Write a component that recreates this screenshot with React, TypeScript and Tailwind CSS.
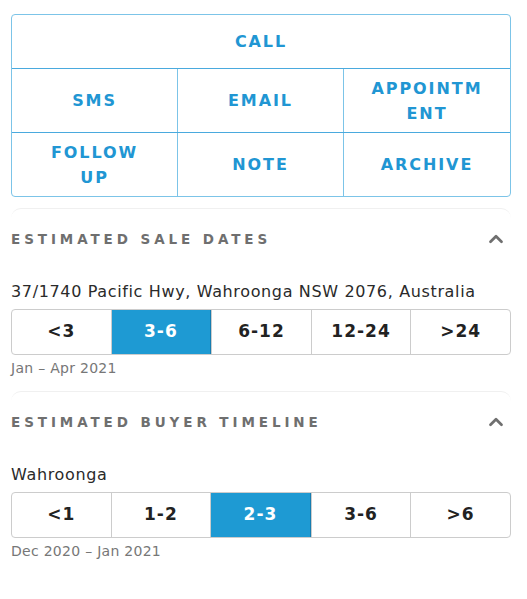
import { ChevronUp } from 'lucide-react';

const font = { fontFamily: '"DejaVu Sans", "Open Sans", sans-serif' };

function ActionCell({ label, className = '' }: { label: React.ReactNode; className?: string }) {
    return (
        <button className={`flex items-center justify-center px-2 text-center text-[16px] font-bold leading-[25px] tracking-[0.12em] text-[#2196d3] ${className}`}>
            {label}
        </button>
    );
}

function Segmented({ options, selected }: { options: string[]; selected: number }) {
    return (
        <div className="flex h-[46px] overflow-hidden rounded-[4px] border border-[#cccccc]">
            {options.map((o, i) => (
                <div
                    key={o}
                    className={`flex flex-1 items-center justify-center text-[17px] font-bold tracking-[0.06em] ${i > 0 ? 'border-l border-[#cccccc]' : ''} ${i === selected ? 'bg-[#1e9ad3] text-white border-r border-r-[#167db0]' : 'text-[#222222]'}`}
                >
                    {o}
                </div>
            ))}
        </div>
    );
}

function Section({ title, place, options, selected, range }: { title: string; place: string; options: string[]; selected: number; range: string }) {
    return (
        <section className="rounded-t-[10px] border-t border-[#f0f0f0]">
            <div className="flex items-center justify-between pt-[19px]">
                <h2 className="text-[13.5px] font-bold tracking-[0.29em] text-[#6f6f6f]">{title}</h2>
                <ChevronUp className="mr-[4px] h-[22px] w-[22px] text-[#6f6f6f]" strokeWidth={3} />
            </div>
            <p className="mt-[30px] text-[16px] tracking-[0.04em] text-[#2a2a2a]">{place}</p>
            <div className="mt-[5px]">
                <Segmented options={options} selected={selected} />
            </div>
            <p className="mt-[3px] text-[14px] tracking-[0.02em] text-[#777777]">{range}</p>
        </section>
    );
}

export default function App() {
    return (
        <div className="min-h-[599px] bg-white pl-[11px] pr-[16px] pt-[14px]" style={font}>
            <div className="overflow-hidden rounded-[4px] border border-[#7cc4e8]">
                <ActionCell label="CALL" className="h-[54px] w-full border-b border-[#4aaade]" />
                <div className="grid h-[64px] grid-cols-3 border-b border-[#4aaade]">
                    <ActionCell label="SMS" className="border-r border-[#7cc4e8]" />
                    <ActionCell label="EMAIL" className="border-r border-[#7cc4e8]" />
                    <ActionCell label={<>APPOINTM<br />ENT</>} />
                </div>
                <div className="grid h-[63px] grid-cols-3">
                    <ActionCell label={<>FOLLOW<br />UP</>} className="border-r border-[#7cc4e8]" />
                    <ActionCell label="NOTE" className="border-r border-[#7cc4e8]" />
                    <ActionCell label="ARCHIVE" />
                </div>
            </div>

            <div className="mt-[11px]">
                <Section
                    title="ESTIMATED SALE DATES"
                    place="37/1740 Pacific Hwy, Wahroonga NSW 2076, Australia"
                    options={['<3', '3-6', '6-12', '12-24', '>24']}
                    selected={1}
                    range="Jan – Apr 2021"
                />
            </div>
            <div className="mt-[12px]">
                <Section
                    title="ESTIMATED BUYER TIMELINE"
                    place="Wahroonga"
                    options={['<1', '1-2', '2-3', '3-6', '>6']}
                    selected={2}
                    range="Dec 2020 – Jan 2021"
                />
            </div>
        </div>
    );
}
